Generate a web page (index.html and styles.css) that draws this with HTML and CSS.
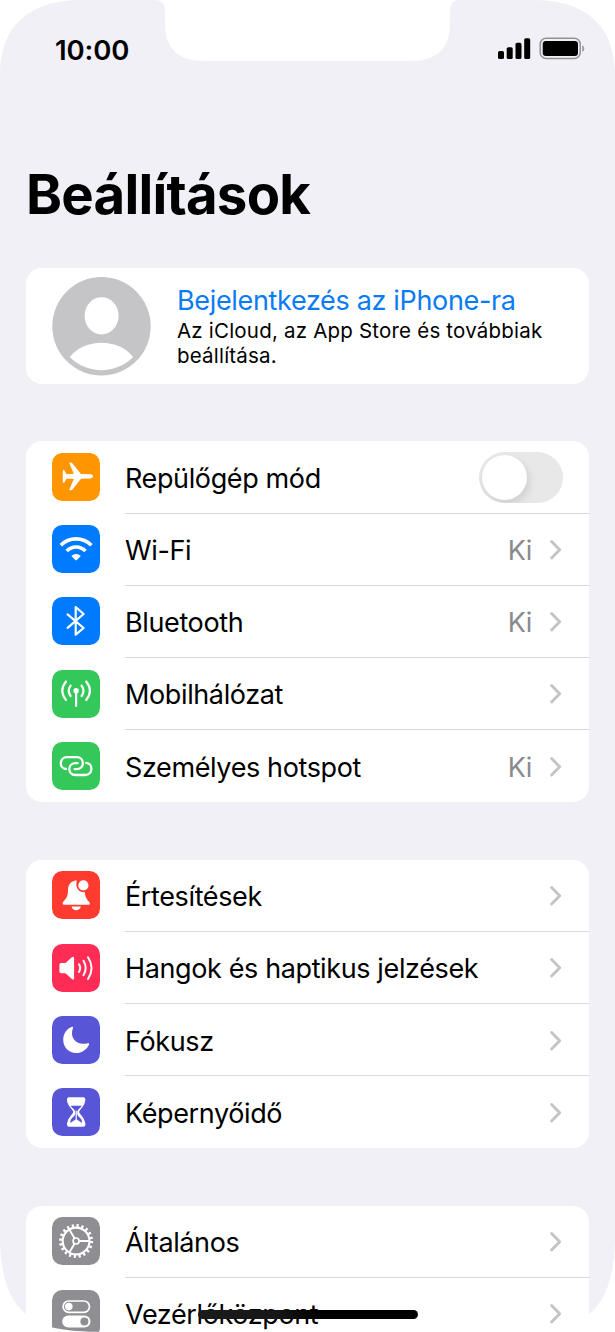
FILE: index.html
```html
<!DOCTYPE html>
<html lang="hu">
<head>
<meta charset="utf-8">
<title>Beállítások</title>
<link rel="stylesheet" href="styles.css">
</head>
<body>
<svg class="symbols" aria-hidden="true">
  <symbol id="chevron" viewBox="0 0 14 22"><path d="M2.6 2.6 L10.7 10.8 L2.6 19" fill="none" stroke="#c4c4c7" stroke-width="2.9" stroke-linecap="round" stroke-linejoin="round"/></symbol>
</svg>
<main class="screen">
  <header class="status">
    <time class="clock">10:00</time>
    <svg class="status-icons" width="88" height="24" viewBox="0 0 88 24">
      <rect x="0" y="14" width="6" height="8" rx="1.6"/>
      <rect x="8.7" y="10.2" width="6" height="11.8" rx="1.6"/>
      <rect x="17.5" y="5.8" width="6" height="16.2" rx="1.6"/>
      <rect x="26.2" y="1.2" width="6" height="20.8" rx="1.6"/>
      <rect x="42.2" y="1.3" width="40" height="20.2" rx="5.8" fill="none" stroke="#939396" stroke-width="1.5"/>
      <rect x="44.7" y="4" width="35.3" height="15" rx="3.2"/>
      <path d="M84.2 8.3 Q86.3 9 86.3 11.4 T84.2 14.7Z" fill="#9c9ca0"/>
    </svg>
  </header>
  <h1 class="title">Beállítások</h1>

  <section class="card account">
    <svg class="avatar" width="99" height="99" viewBox="0 0 99 99">
      <circle cx="49.5" cy="49.3" r="49.2" fill="#c5c5c7"/>
      <ellipse cx="49.6" cy="38.8" rx="17" ry="18.6" fill="#fff"/>
      <path d="M17.7 80 C33 61 66 61 81.2 80 C64 97.5 35 97.5 17.7 80Z" fill="#fff"/>
    </svg>
    <div class="account-text">
      <div class="signin">Bejelentkezés az iPhone-ra</div>
      <div class="signin-note">Az iCloud, az App Store és továbbiak<br>beállítása.</div>
    </div>
  </section>

  <section class="card">
    <div class="row">
      <svg class="icon orange" viewBox="0 0 48 48"><path fill="#fff" d="M38.5 21.3 C42 21.5 42 25.1 38.5 25.4 L29 25.7 L20.5 36.4 Q19.8 37.2 18.8 37.2 H17.6 Q17.1 37 17.4 36.3 L21.8 25.9 L14.6 25.4 L12.5 29.2 Q12.2 29.8 11.6 29.8 Q10.8 29.8 10.8 28.9 V17.8 Q10.8 16.9 11.6 16.9 Q12.2 16.9 12.5 17.5 L14.6 21.3 L21.8 20.8 L17.4 10.6 Q17.1 9.7 17.8 9.6 H18.8 Q19.8 9.6 20.5 10.4 L29 21Z"/></svg>
      <div class="cell"><span class="label">Repülőgép mód</span><span class="toggle"><span class="knob"></span></span></div>
    </div>
    <div class="row">
      <svg class="icon blue" viewBox="0 0 48 48"><g fill="none" stroke="#fff" stroke-width="3.6"><path d="M8.8 20.3 C17 11.7 31 11.7 39.4 20.3"/><path d="M14.7 26.1 C20 20.7 28.2 20.7 33.5 26.1"/></g><path fill="#fff" d="M19.4 30.9 C22 28.2 26.2 28.2 28.8 30.9 L24.8 35.1 Q24.1 35.8 23.4 35.1Z"/></svg>
      <div class="cell"><span class="label">Wi-Fi</span><span class="value">Ki</span><svg class="chev"><use href="#chevron"/></svg></div>
    </div>
    <div class="row">
      <svg class="icon blue" viewBox="0 0 48 48"><path fill="none" stroke="#fff" stroke-width="2.2" stroke-linecap="round" stroke-linejoin="round" d="M15.6 17.4 L31.6 31 L23.7 37.7 V10 L31.6 17 L15.6 30.8"/></svg>
      <div class="cell"><span class="label">Bluetooth</span><span class="value">Ki</span><svg class="chev"><use href="#chevron"/></svg></div>
    </div>
    <div class="row">
      <svg class="icon green" viewBox="0 0 48 48"><circle cx="24.1" cy="20.8" r="2.7" fill="#fff"/><g fill="none" stroke="#fff" stroke-width="2.2" stroke-linecap="round"><path d="M24.1 22 V36"/><path d="M18.6 15.6 Q14.9 20.8 18.6 26"/><path d="M29.6 15.6 Q33.3 20.8 29.6 26"/><path d="M14 11.5 Q6.6 20.8 14 30"/><path d="M34.2 11.5 Q41.6 20.8 34.2 30"/></g></svg>
      <div class="cell"><span class="label">Mobilhálózat</span><svg class="chev"><use href="#chevron"/></svg></div>
    </div>
    <div class="row">
      <svg class="icon green" viewBox="0 0 48 48"><g fill="none" stroke="#fff" stroke-width="2.3" stroke-linecap="round"><path d="M14 27 C6.8 26.4 7 15.3 15 15.2 H24.6 C33 15.2 33 27.2 24.6 27.2 H22.7"/><path d="M34.2 20.9 C41.4 21.5 41.2 33 33.2 33 H23.6 C15.2 33 15.2 21.2 23.6 21.2 H25.6"/></g></svg>
      <div class="cell"><span class="label">Személyes hotspot</span><span class="value">Ki</span><svg class="chev"><use href="#chevron"/></svg></div>
    </div>
  </section>

  <section class="card">
    <div class="row">
      <svg class="icon red" viewBox="0 0 48 48"><path fill="#fff" d="M24.7 9.3 C18.5 10 16 14.2 16 19 C15.8 27 13.8 27.4 11.1 30.9 C10 32.6 10.8 33.8 12.6 33.8 H36 C37.9 33.8 38.5 32.5 37.2 30.9 C34.7 27.8 33.3 26.4 32.7 20.4 C28 20.6 23.7 17.2 24.4 12.7 Z"/><circle cx="31.4" cy="14.5" r="6.7" fill="#ff3b30"/><circle cx="31.4" cy="14.4" r="5.1" fill="#fff"/><path fill="#fff" d="M19.6 35.5 H28.8 C28 40.5 20.4 40.5 19.6 35.5Z"/></svg>
      <div class="cell"><span class="label">Értesítések</span><svg class="chev"><use href="#chevron"/></svg></div>
    </div>
    <div class="row">
      <svg class="icon pink" viewBox="0 0 48 48"><path fill="#fff" d="M9.2 18.9 H13.5 L19.8 13.2 C21 12.2 22.1 12.7 22.1 14.2 V34 C22.1 35.5 21 36 19.8 35 L13.5 29.3 H9.2 Q7.4 29.3 7.4 27.5 V20.7 Q7.4 18.9 9.2 18.9Z"/><g fill="none" stroke="#fff" stroke-width="2" stroke-linecap="round"><path d="M27 20.3 Q29.4 24.1 27 27.9"/><path d="M31.5 16.8 Q35.9 24.1 31.5 31.3"/><path d="M36 13.3 Q43.2 24.1 36 35"/></g></svg>
      <div class="cell"><span class="label">Hangok és haptikus jelzések</span><svg class="chev"><use href="#chevron"/></svg></div>
    </div>
    <div class="row">
      <svg class="icon purple" viewBox="0 0 48 48"><path fill="#fff" d="M20.4 10.8 C21.1 11 21.2 11.5 20.9 12.3 C17.3 21.8 24.5 30.3 35.8 27.2 C37 26.9 37.5 27.7 37 28.7 C34.6 33.8 29.8 37 24.3 37 C16.7 37 11.2 31.2 11.2 23.8 C11.2 18 14.4 13.2 19.4 11 Q20 10.7 20.4 10.8Z"/></svg>
      <div class="cell"><span class="label">Fókusz</span><svg class="chev"><use href="#chevron"/></svg></div>
    </div>
    <div class="row">
      <svg class="icon purple" viewBox="0 0 48 48"><path fill="#fff" stroke="#fff" stroke-width="2" stroke-linejoin="round" d="M17 10.2 H31.3 Q32.5 10.3 32.3 12.2 C32 18.5 26.2 20.5 26.2 24 C26.2 27.5 32 29 32.4 35.6 Q32.6 37.6 31.2 37.8 H17.1 Q15.8 37.6 16 35.6 C16.4 29 22.2 27.5 22.2 24 C22.2 20.5 16.3 18.5 16 12.2 Q15.8 10.3 17 10.2Z"/><path fill="#5856d6" d="M18.6 17.8 H29.8 Q29 19.3 26.8 21 Q25.2 22.4 25.1 25 C25.2 29.5 29.8 28.5 30.2 34.9 L24.9 31.5 Q24.2 31.1 23.5 31.5 L18.2 34.9 C18.6 28.5 23.2 29.5 23.3 25 Q23.2 22.4 21.6 21 Q19.2 19.2 18.6 17.8Z"/><path stroke="#fff" stroke-width="1.2" d="M24.2 22.5 V32"/></svg>
      <div class="cell"><span class="label">Képernyőidő</span><svg class="chev"><use href="#chevron"/></svg></div>
    </div>
  </section>

  <section class="card">
    <div class="row">
      <svg class="icon gray" viewBox="0 0 48 48"><g fill="none" stroke="#fff"><circle cx="24.1" cy="24" r="15.5" stroke-width="3" stroke-dasharray="2.2 2.669"/><circle cx="24.1" cy="24" r="13.4" stroke-width="2.1"/><circle cx="24.1" cy="24" r="3" stroke-width="1.7"/><path stroke-width="1.9" d="M27.2 24 H37 M22.5 21.3 L17.3 12.4 M22.5 26.7 L17.3 35.6"/></g></svg>
      <div class="cell"><span class="label">Általános</span><svg class="chev"><use href="#chevron"/></svg></div>
    </div>
    <div class="row">
      <svg class="icon gray" viewBox="0 0 48 48"><rect x="11.1" y="11" width="26.4" height="11.3" rx="5.65" fill="none" stroke="#fff" stroke-width="1.7"/><circle cx="16.8" cy="16.6" r="3.8" fill="#fff"/><rect x="10.2" y="25.5" width="28.3" height="12.1" rx="6.05" fill="#fff"/><circle cx="32.4" cy="31.5" r="4" fill="#8e8e93"/></svg>
      <div class="cell"><span class="label">Vezérlőközpont</span><svg class="chev"><use href="#chevron"/></svg></div>
    </div>
  </section>

  <svg class="bezel" width="615" height="1332" viewBox="0 0 615 1332" fill="#fff">
    <path d="M0 0 H78 C30 1 1 25 0 73Z"/>
    <path d="M615 0 H537 C585 1 614 25 615 73Z"/>
    <path d="M155 0 C162 0 165 4 165 12 V24 C165 48 178 61 204 61 H411 C437 61 450 48 450 24 V12 C450 4 453 0 460 0Z"/>
    <path d="M0 1241 C1 1275 8 1300 27 1315 C43 1328 63 1331.5 103 1332 H0Z"/>
    <path d="M615 1241 C614 1275 607 1300 588 1315 C572 1328 552 1331.5 512 1332 H615Z"/>
  </svg>
  <div class="home-bar"></div>
</main>
</body>
</html>
```
FILE: styles.css
```css
* { box-sizing: border-box; }
body { margin: 0; font-family: Inter, "Liberation Sans", sans-serif; color: #000; background: #fff; }
.symbols { position: absolute; width: 0; height: 0; }
.screen { position: relative; width: 615px; height: 1332px; overflow: hidden; background: #f1f0f6; padding: 0 26px; }
.status { height: 98px; display: flex; justify-content: space-between; align-items: center; padding: 0 3px 0 29px; }
.clock { font-size: 27.5px; font-weight: 600; letter-spacing: -0.1px; line-height: 28px; padding-top: 1px; }
.status-icons { margin-bottom: 1px; }
.title { margin: 0; height: 170.4px; padding-top: 62px; font-size: 54.5px; line-height: 68px; font-weight: 700; letter-spacing: -0.75px; white-space: nowrap; }
.card { width: 563px; background: #fff; border-radius: 16px; margin-bottom: 57.5px; overflow: hidden; }
.account { height: 115.6px; display: flex; padding: 9px 0 0 26px; margin-bottom: 57.5px; }
.avatar { flex: none; margin-right: 26px; }
.account-text { padding-top: 7px; white-space: nowrap; }
.signin { color: #087bf5; font-size: 27px; line-height: 34px; letter-spacing: -0.34px; }
.signin-note { font-size: 20.5px; line-height: 25px; letter-spacing: 0.2px; }
.row { display: flex; height: 72.15px; padding-left: 26px; }
.icon { flex: none; width: 48px; height: 48px; margin: 11.7px 25px 0 0; border-radius: 10.5px; }
.orange { background: #ff9500; }
.blue { background: #007aff; }
.green { background: #34c759; }
.red { background: #ff3b30; }
.pink { background: #ff2d55; }
.purple { background: #5856d6; }
.gray { background: #8e8e93; }
.cell { flex: 1; display: flex; align-items: center; padding: 2px 26px 0 0; border-bottom: 1px solid #d9d9dc; }
.row:last-child .cell { border-bottom-color: transparent; }
.label { flex: 1; font-size: 27px; line-height: 34px; letter-spacing: -0.38px; padding-top: 2px; white-space: nowrap; }
.value { font-size: 27px; line-height: 34px; letter-spacing: -0.38px; padding-top: 2px; color: #8a8a8e; margin-right: 17px; }
.chev { width: 14px; height: 22px; flex: none; }
.toggle { width: 84px; height: 51px; border-radius: 26px; background: #e8e8e8; padding: 3px; margin-top: -1px; overflow: hidden; }
.knob { display: block; width: 45px; height: 45px; border-radius: 50%; background: #fff; box-shadow: 2px 4px 9px rgba(0, 0, 0, 0.12); }
.bezel { position: absolute; left: 0; top: 0; }
.home-bar { position: absolute; left: 198px; top: 1310px; width: 220px; height: 9px; border-radius: 5px; background: linear-gradient(90deg, #1b1b1b, #171717 35%, #000 55%); }
```
